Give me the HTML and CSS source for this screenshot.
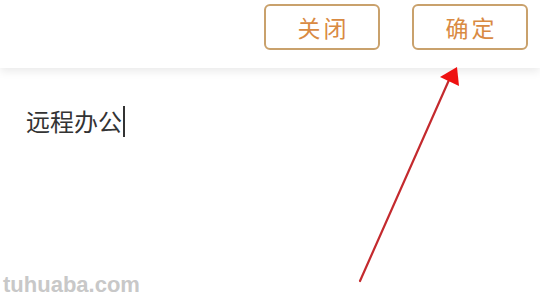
FILE: index.html
```html
<!DOCTYPE html>
<html lang="zh-CN">
<head>
    <meta charset="UTF-8">
    <meta name="viewport" content="width=device-width, initial-scale=1.0">
    <title>远程办公</title>
    <link rel="stylesheet" href="styles.css">
</head>
<body>

    <div class="toolbar">
        <button class="btn">关闭</button>
        <button class="btn">确定</button>
    </div>

    <div class="editor">
        <span class="text">远程办公</span><span class="caret"></span>
    </div>

    <div class="watermark">tuhuaba.com</div>

    <svg class="arrow" width="540" height="300" viewBox="0 0 540 300">
        <line x1="360" y1="281" x2="449" y2="80" stroke="#c42a2e" stroke-width="2.2" stroke-linecap="round"/>
        <polygon points="457,67 459,86 440,77" fill="#ee1111"/>
    </svg>

</body>
</html>
```

FILE: styles.css
```css
* {
    box-sizing: border-box;
}

body {
    margin: 0;
    width: 540px;
    height: 300px;
    overflow: hidden;
    position: relative;
    background: #fff;
    font-family: "Noto Sans CJK SC", "Liberation Sans", sans-serif;
}

.toolbar {
    height: 68px;
    display: flex;
    justify-content: flex-end;
    align-items: flex-start;
    gap: 32px;
    padding: 4px 12px 0 0;
    background: #fff;
    box-shadow: 0 3px 9px rgba(0, 0, 0, 0.09);
    position: relative;
}

.btn {
    width: 116px;
    height: 46px;
    border: 2px solid #c9a16c;
    border-radius: 6px;
    background: #fff;
    color: #d98a42;
    font-family: "Noto Sans CJK SC", sans-serif;
    font-size: 23px;
    letter-spacing: 3px;
    padding: 0 0 0 3px;
}

.editor {
    display: flex;
    align-items: center;
    padding: 37px 0 0 26px;
}

.text {
    font-size: 24px;
    color: #333;
    line-height: 32px;
}

.caret {
    width: 2px;
    height: 31px;
    margin-left: 1px;
    background: #333;
}

.watermark {
    position: absolute;
    left: 3px;
    top: 272px;
    font-family: "Liberation Sans", Arial, sans-serif;
    font-weight: bold;
    font-size: 22px;
    color: #c8c8c8;
}

.arrow {
    position: absolute;
    left: 0;
    top: 0;
}
```
